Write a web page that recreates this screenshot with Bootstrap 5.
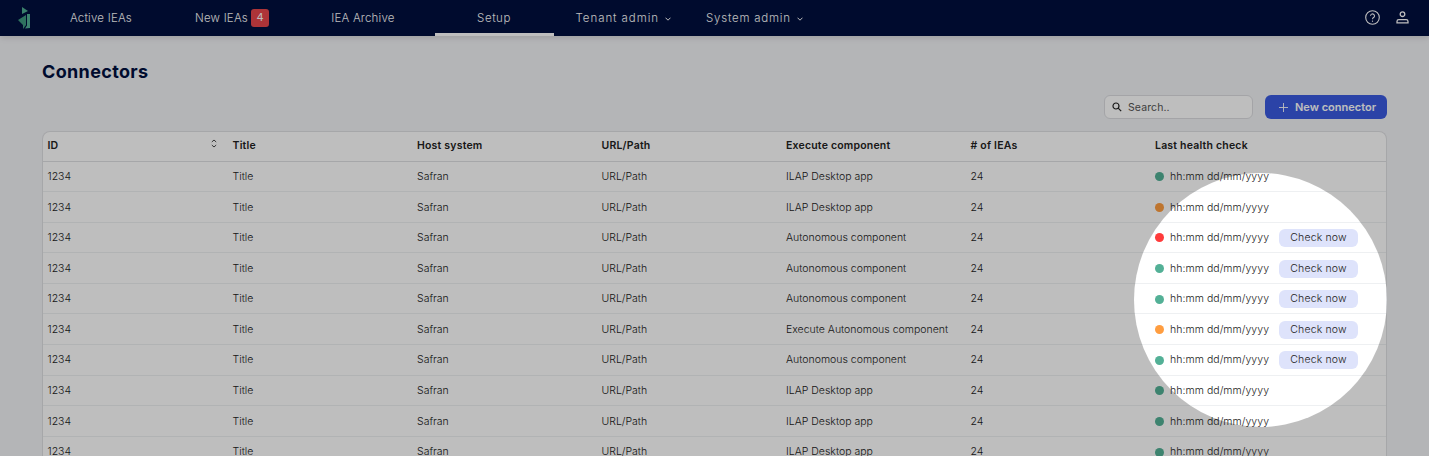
<!DOCTYPE html>
<html lang="en"><head><meta charset="utf-8"><title>Connectors</title>
<link href="https://cdn.jsdelivr.net/npm/bootstrap@5.3.0/dist/css/bootstrap.min.css" rel="stylesheet">
<style>
html,body{height:456px;overflow:hidden}
body{background:#f2f3f6;font-family:Inter,"Liberation Sans",sans-serif;position:relative;color:#333}
.topbar{height:36px;background:#000f3e;box-shadow:0 2px 6px rgba(0,0,0,.12);padding:0 20.5px 0 18px}
.brand-mark{width:12px;height:22px;margin-right:11.5px;flex:none}
.menu{gap:12px;height:36px}
.menu-item{min-width:119px;height:36px;padding:4px 10px 0;color:#fff;text-decoration:none;font-size:11.5px;font-weight:300;letter-spacing:.2px;display:flex;align-items:center;justify-content:center;border-bottom:3px solid transparent}
.menu-item.current{border-bottom-color:#fff;letter-spacing:.55px}
.menu-item.tenant{min-width:0;letter-spacing:.93px;padding-right:11px}
.menu-item.sysadm{min-width:0;letter-spacing:.77px;padding-left:12px}
.count{background:#e8474c;color:#fff;border-radius:3px;font-size:11px;font-weight:400;width:18px;height:18px;display:inline-flex;align-items:center;justify-content:center;margin:0 0 2px 3px;letter-spacing:0}
.chev{margin-left:6px}
.top-icons{gap:15.5px;margin-bottom:2px}
.content{padding:0 42px}
.page-title{font-size:18px;font-weight:700;color:#000f3e;letter-spacing:.35px;line-height:22px;margin:25px 0 0}
.tools{margin-top:12px;gap:12px}
.searchbox{width:149px;height:24px;background:#fff;border:1px solid #dcdde1;border-radius:6px;padding-left:7px;font-size:10.5px;color:#555;gap:6px;letter-spacing:.1px}
.searchbox span{padding-top:1px}
.addbtn{width:122px;height:24px;background:#3a5be1;border:0;border-radius:6px;color:#fff;font-size:11px;font-weight:600;padding:0 0 0 14px;gap:7px;letter-spacing:0}
.tablewrap{margin-top:12px;background:#fff;border:1px solid #dfe0e3;border-bottom:0;border-radius:8px 8px 0 0;overflow:hidden}
.conn{table-layout:fixed;width:100%;margin:0;font-size:10.5px;color:#333;letter-spacing:0}
.conn th{height:29px;padding:0 0 0 4.5px;font-weight:600;font-size:10.5px;color:#222;border-bottom:1px solid #dfe0e3;vertical-align:middle;letter-spacing:.2px}
.conn td{height:30.6px;padding:1px 0 0 4.5px;border-bottom:1px solid #eef0f2;vertical-align:middle;color:#222;font-weight:300;background:transparent}
.sorter{float:right;margin:1px 11px 0 0}
.dot{width:9px;height:9px;border-radius:50%;flex:none;margin-right:6px}
.ok{background:#53b096}.warn{background:#ff9d40}.bad{background:#ff3b3b}
.stamp{width:97px;flex:none;white-space:nowrap;letter-spacing:.05px}
.checkbtn{width:79px;height:18px;margin-left:12px;padding:0;border:0;border-radius:6px;background:#dee3fb;color:#222;font-size:10.5px;font-weight:300;letter-spacing:.15px;line-height:18px}
.spotlight{position:absolute;left:1134px;top:173px;width:253px;height:254px;border-radius:50%;box-shadow:0 0 0 1600px rgba(0,0,0,.255);pointer-events:none}
</style></head><body>
<nav class="topbar d-flex align-items-center">
<svg class="brand-mark" viewBox="0 0 12 22"><path d="M4 0l6 4-6 3z" fill="#4fae92"/><path d="M8 8v10l-3 4v-4L0 13z" fill="#3f9a80"/><path d="M9 7h3v14l-5 .5 2-3z" fill="#53b096"/></svg>
<div class="menu d-flex">
<a class="menu-item" href="#">Active IEAs</a>
<a class="menu-item" href="#">New IEAs<span class="count">4</span></a>
<a class="menu-item" href="#">IEA Archive</a>
<a class="menu-item current" href="#">Setup</a>
<a class="menu-item tenant" href="#">Tenant admin<svg class="chev" width="6" height="4" viewBox="0 0 6 4"><path d="M.5.7L3 3.2 5.5.7" fill="none" stroke="#fff"/></svg></a>
<a class="menu-item sysadm" href="#">System admin<svg class="chev" width="6" height="4" viewBox="0 0 6 4"><path d="M.5.7L3 3.2 5.5.7" fill="none" stroke="#fff"/></svg></a>
</div>
<div class="top-icons ms-auto d-flex align-items-center">
<svg width="15" height="15" viewBox="0 0 15 15" fill="none" stroke="#fff" stroke-width="1.1"><circle cx="7.5" cy="7.5" r="6.8"/><path d="M5.5 5.8a2 2 0 1 1 3 1.8c-.7.4-1 .8-1 1.6"/><path d="M7.5 10.6v1.2"/></svg>
<svg width="13" height="13" viewBox="0 0 13 13" fill="none" stroke="#fff" stroke-width="1.3"><circle cx="6.5" cy="3.2" r="2.3"/><path d="M1 11.9V10.4c0-1 .8-1.7 1.8-1.7h7.4c1 0 1.8.7 1.8 1.7v1.5z"/></svg>
</div>
</nav>
<main class="content">
<h1 class="page-title">Connectors</h1>
<div class="tools d-flex justify-content-end">
<div class="searchbox d-flex align-items-center"><svg width="10" height="10" viewBox="0 0 10 10" fill="none" stroke="#222" stroke-width="1.2"><circle cx="4" cy="4" r="3"/><path d="M6.2 6.2L9.2 9.2"/></svg><span>Search..</span></div>
<button class="addbtn d-flex align-items-center" type="button"><svg width="9" height="9" viewBox="0 0 9 9" stroke="#fff" stroke-width=".9"><path d="M4.5 0v9M0 4.5h9"/></svg>New connector</button>
</div>
<div class="tablewrap">
<table class="conn table">
<colgroup><col style="width:185px"><col style="width:184.5px"><col style="width:184.5px"><col style="width:184.5px"><col style="width:184.5px"><col style="width:184.5px"><col></colgroup>
<thead><tr><th>ID<svg class="sorter" width="6" height="9" viewBox="0 0 6 9" fill="none" stroke="#333" stroke-width=".9"><path d="M.8 3L3 1l2.2 2M.8 6L3 8l2.2-2"/></svg></th><th>Title</th><th>Host system</th><th>URL/Path</th><th>Execute component</th><th># of IEAs</th><th>Last health check</th></tr></thead>
<tbody>
<tr><td>1234</td><td>Title</td><td>Safran</td><td>URL/Path</td><td>ILAP Desktop app</td><td>24</td><td><div class="d-flex align-items-center"><span class="dot ok"></span><span class="stamp">hh:mm dd/mm/yyyy</span></div></td></tr>
<tr><td>1234</td><td>Title</td><td>Safran</td><td>URL/Path</td><td>ILAP Desktop app</td><td>24</td><td><div class="d-flex align-items-center"><span class="dot warn"></span><span class="stamp">hh:mm dd/mm/yyyy</span></div></td></tr>
<tr><td>1234</td><td>Title</td><td>Safran</td><td>URL/Path</td><td>Autonomous component</td><td>24</td><td><div class="d-flex align-items-center"><span class="dot bad"></span><span class="stamp">hh:mm dd/mm/yyyy</span><button class="checkbtn" type="button">Check now</button></div></td></tr>
<tr><td>1234</td><td>Title</td><td>Safran</td><td>URL/Path</td><td>Autonomous component</td><td>24</td><td><div class="d-flex align-items-center"><span class="dot ok"></span><span class="stamp">hh:mm dd/mm/yyyy</span><button class="checkbtn" type="button">Check now</button></div></td></tr>
<tr><td>1234</td><td>Title</td><td>Safran</td><td>URL/Path</td><td>Autonomous component</td><td>24</td><td><div class="d-flex align-items-center"><span class="dot ok"></span><span class="stamp">hh:mm dd/mm/yyyy</span><button class="checkbtn" type="button">Check now</button></div></td></tr>
<tr><td>1234</td><td>Title</td><td>Safran</td><td>URL/Path</td><td>Execute Autonomous component</td><td>24</td><td><div class="d-flex align-items-center"><span class="dot warn"></span><span class="stamp">hh:mm dd/mm/yyyy</span><button class="checkbtn" type="button">Check now</button></div></td></tr>
<tr><td>1234</td><td>Title</td><td>Safran</td><td>URL/Path</td><td>Autonomous component</td><td>24</td><td><div class="d-flex align-items-center"><span class="dot ok"></span><span class="stamp">hh:mm dd/mm/yyyy</span><button class="checkbtn" type="button">Check now</button></div></td></tr>
<tr><td>1234</td><td>Title</td><td>Safran</td><td>URL/Path</td><td>ILAP Desktop app</td><td>24</td><td><div class="d-flex align-items-center"><span class="dot ok"></span><span class="stamp">hh:mm dd/mm/yyyy</span></div></td></tr>
<tr><td>1234</td><td>Title</td><td>Safran</td><td>URL/Path</td><td>ILAP Desktop app</td><td>24</td><td><div class="d-flex align-items-center"><span class="dot ok"></span><span class="stamp">hh:mm dd/mm/yyyy</span></div></td></tr>
<tr><td>1234</td><td>Title</td><td>Safran</td><td>URL/Path</td><td>ILAP Desktop app</td><td>24</td><td><div class="d-flex align-items-center"><span class="dot ok"></span><span class="stamp">hh:mm dd/mm/yyyy</span></div></td></tr>
</tbody></table>
</div>
</main>
<div class="spotlight"></div>
</body></html>
